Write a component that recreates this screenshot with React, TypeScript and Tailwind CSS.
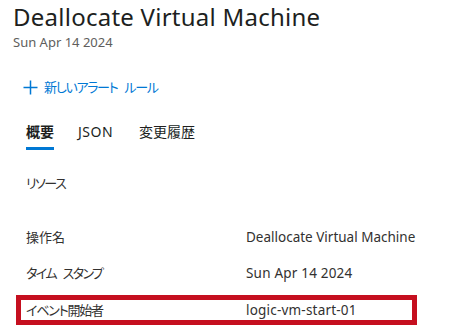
import React from "react";

const F = { fontFamily: '"Noto Sans", "Noto Sans CJK JP", sans-serif' };

export default function App() {
  return (
    <div className="w-[449px] h-[335px] bg-white overflow-hidden text-[#323130] [font-feature-settings:'palt']" style={F}>
      <div className="pl-[13px]">
        <div className="text-[24px] leading-[33px] tracking-[0.25px] text-[#201f1e]">Deallocate Virtual Machine</div>
        <div className="text-[13px] leading-[18px] text-[#605e5c]">Sun Apr 14 2024</div>
      </div>
      <div className="h-[26px]" />
      <div className="flex items-center h-[20px] pl-[23px] gap-[6px] text-[#0078d4]">
        <svg width="15" height="15" viewBox="0 0 15 15">
          <path d="M7.5 0.5v14M0.5 7.5h14" stroke="#0078d4" strokeWidth="1.5" fill="none" />
        </svg>
        <span className="text-[13px] leading-[20px] tracking-[-1.3px] [word-spacing:5px]">新しいアラート ルール</span>
      </div>
      <div className="h-[25px]" />
      <div className="flex pl-[26px] text-[14px] leading-[20px]">
        <div className="flex flex-col">
          <span className="text-[#201f1e] font-semibold">概要</span>
          <div className="mt-[5px] h-[3px] bg-[#0078d4]" />
        </div>
        <span className="ml-[24px] text-[#201f1e] tracking-[0.5px]">JSON</span>
        <span className="ml-[26px] text-[#201f1e]">変更履歴</span>
      </div>
      <div className="h-[23px]" />
      <div className="pl-[26px] text-[13px] leading-[20px] tracking-[-1.5px]">リソース</div>
      <div className="h-[26px]" />
      <div className="flex flex-col text-[13px] leading-[20px]">
        <div className="flex h-[36px] items-center pl-[26px]">
          <span className="w-[220px]">操作名</span>
          <span className="text-[13.5px]">Deallocate Virtual Machine</span>
        </div>
        <div className="flex h-[36px] items-center pl-[26px]">
          <span className="w-[220px] tracking-[-1.6px] [word-spacing:5px]">タイム スタンプ</span>
          <span className="text-[13.5px] tracking-[0.2px]">Sun Apr 14 2024</span>
        </div>
        <div className="mt-[4px] ml-[16px] w-[401px] h-[30px] border-[5px] border-[#c50f1f] flex items-center pl-[5px]">
          <span className="w-[220px] tracking-[-1.2px]">イベント開始者</span>
          <span className="text-[13.5px] tracking-[0.2px]">logic-vm-start-01</span>
        </div>
      </div>
    </div>
  );
}
